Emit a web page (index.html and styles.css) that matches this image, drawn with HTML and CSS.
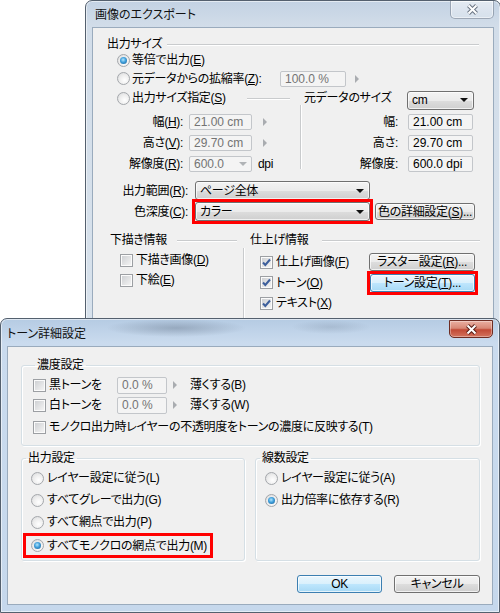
FILE: index.html
```html
<!DOCTYPE html>
<html lang="ja">
<head>
<meta charset="utf-8">
<title>画像のエクスポート</title>
<link rel="stylesheet" href="styles.css">
</head>
<body>

<div class="win win-back">
  <div class="titlebar">
    <span class="title">画像のエクスポート</span>
    <span class="close inactive">
      <svg width="13" height="11" viewBox="0 0 13 11"><path d="M2.5 1.5 L10.5 9.5 M10.5 1.5 L2.5 9.5" stroke="#6b7684" stroke-width="4" fill="none"/><path d="M2.5 1.5 L10.5 9.5 M10.5 1.5 L2.5 9.5" stroke="#fff" stroke-width="2" fill="none"/></svg>
    </span>
  </div>
  <div class="client client-back">
    <div class="head head-size"><span>出力サイズ</span><i class="line"></i></div>
    <div class="opt"><span class="radio on"></span><span>等倍で出力(<u>E</u>)</span></div>
    <div class="opt"><span class="radio"></span><span class="lbl-scale">元データからの拡縮率(<u>Z</u>):</span><span class="field dis w66">100.0 %</span><span class="tri tri-scale"></span></div>
    <div class="opt"><span class="radio"></span><span class="lbl-spec">出力サイズ指定(<u>S</u>)</span><i class="hline"></i><span class="src-lbl">元データのサイズ</span><span class="combo combo-cm"><span>cm</span><b class="dd"></b></span></div>

    <div class="dims">
      <div class="dims-l">
        <div class="dim"><span class="dl">幅(<u>H</u>):</span><span class="field dis w63">21.00 cm</span><span class="tri tri-dim"></span></div>
        <div class="dim"><span class="dl">高さ(<u>V</u>):</span><span class="field dis w63">29.70 cm</span><span class="tri tri-dim"></span></div>
        <div class="dim"><span class="dl">解像度(<u>R</u>):</span><span class="field dis w63 fcombo"><span>600.0</span><b class="dd grey"></b></span><span class="dpi">dpi</span></div>
      </div>
      <i class="vline vline-dims"></i>
      <div class="dims-r">
        <div class="dim"><span class="dl dlr">幅:</span><span class="field w65">21.00 cm</span></div>
        <div class="dim"><span class="dl dlr">高さ:</span><span class="field w65">29.70 cm</span></div>
        <div class="dim"><span class="dl dlr">解像度:</span><span class="field w65">600.0 dpi</span></div>
      </div>
    </div>

    <div class="pair pair1"><span class="pl">出力範囲(<u>R</u>):</span><span class="combo combo-wide"><span>ページ全体</span><b class="dd"></b></span></div>
    <div class="pair pair2"><span class="pl">色深度(<u>C</u>):</span><span class="hl hl-combo"><span class="combo combo-wide"><span>カラー</span><b class="dd"></b></span></span><span class="btn btn-color">色の詳細設定(<u>S</u>)...</span></div>

    <div class="info">
      <div class="info-heads">
        <div class="head head-draft"><span>下描き情報</span><i class="line"></i></div>
        <div class="head head-fin"><span>仕上げ情報</span><i class="line"></i></div>
      </div>
      <div class="info-body">
        <div class="info-l">
          <div class="crow"><span class="chk"></span><span>下描き画像(<u>D</u>)</span></div>
          <div class="crow"><span class="chk"></span><span>下絵(<u>E</u>)</span></div>
        </div>
        <i class="vline vline-info"></i>
        <div class="info-r">
          <div class="crow"><span class="chk on"><svg width="11" height="11" viewBox="0 0 11 11"><path d="M2 5.5 L4.3 8 L9 2.5" stroke="#3d5f9c" stroke-width="2" fill="none"/></svg></span><span>仕上げ画像(<u>F</u>)</span><span class="btn btn-side">ラスター設定(<u>R</u>)...</span></div>
          <div class="crow crow-mid"><span class="chk on"><svg width="11" height="11" viewBox="0 0 11 11"><path d="M2 5.5 L4.3 8 L9 2.5" stroke="#3d5f9c" stroke-width="2" fill="none"/></svg></span><span>トーン(<u>O</u>)</span><span class="hl hl-btn"><span class="btn btn-side hot">トーン設定(<u>T</u>)...</span></span></div>
          <div class="crow"><span class="chk on"><svg width="11" height="11" viewBox="0 0 11 11"><path d="M2 5.5 L4.3 8 L9 2.5" stroke="#3d5f9c" stroke-width="2" fill="none"/></svg></span><span>テキスト(<u>X</u>)</span></div>
        </div>
      </div>
    </div>
  </div>
</div>

<div class="win win-front">
  <div class="titlebar">
    <span class="title">トーン詳細設定</span>
    <span class="close active">
      <svg width="13" height="11" viewBox="0 0 13 11"><path d="M2.5 1.5 L10.5 9.5 M10.5 1.5 L2.5 9.5" stroke="#5a1e16" stroke-width="4" fill="none"/><path d="M2.5 1.5 L10.5 9.5 M10.5 1.5 L2.5 9.5" stroke="#fff" stroke-width="2" fill="none"/></svg>
    </span>
  </div>
  <div class="client client-front">
    <fieldset class="group g-density">
      <legend class="leg-first">濃度設定</legend>
      <div class="drow drow-1"><span class="chk"></span><span class="dlbl">黒トーンを</span><span class="field dis w50">0.0 %</span><span class="tri tri-d"></span><span class="thin">薄くする(B)</span></div>
      <div class="drow"><span class="chk"></span><span class="dlbl">白トーンを</span><span class="field dis w50">0.0 %</span><span class="tri tri-d"></span><span class="thin">薄くする(W)</span></div>
      <div class="drow drow-3"><span class="chk"></span><span>モノクロ出力時レイヤーの不透明度をトーンの濃度に反映する(T)</span></div>
    </fieldset>

    <div class="grow">
      <fieldset class="group g-out">
        <legend>出力設定</legend>
        <div class="rrow rrow-1"><span class="radio"></span><span>レイヤー設定に従う(L)</span></div>
        <div class="rrow"><span class="radio"></span><span>すべてグレーで出力(G)</span></div>
        <div class="rrow"><span class="radio"></span><span>すべて網点で出力(P)</span></div>
        <div class="rrow hl-row"><span class="radio on"></span><span>すべてモノクロの網点で出力(M)</span></div>
      </fieldset>
      <fieldset class="group g-lines">
        <legend>線数設定</legend>
        <div class="rrow rrow-1"><span class="radio"></span><span>レイヤー設定に従う(A)</span></div>
        <div class="rrow"><span class="radio on"></span><span>出力倍率に依存する(R)</span></div>
      </fieldset>
    </div>

    <div class="btnrow">
      <span class="btn btn-dlg def">OK</span>
      <span class="btn btn-dlg btn-cancel">キャンセル</span>
    </div>
  </div>
</div>

</body>
</html>
```

FILE: styles.css
```css
* { box-sizing: border-box; margin: 0; padding: 0; }
html, body { width: 500px; height: 613px; }
body {
  position: relative;
  overflow: hidden;
  background: #fff;
  font-family: "Liberation Sans", "Noto Sans CJK JP", sans-serif;
  font-size: 12px;
  line-height: 14px;
  letter-spacing: -0.3px;
  color: #000;
  font-feature-settings: "palt";
}
u { text-decoration: underline; text-underline-offset: 1px; }

/* ---------- windows ---------- */
.win {
  position: absolute;
  display: flex;
  flex-direction: column;
  border: 1px solid #54606e;
  border-radius: 7px 7px 0 0;
  padding: 0 6px;
  box-shadow: inset 0 0 0 1px rgba(255,255,255,.55);
}
.win-back {
  left: 85px;
  top: 0;
  width: 416px;
  height: 330px;
  background: linear-gradient(#c3d2e3 0, #d2dde9 26px, #d8e2ec 100%);
}
.win-front {
  left: 0;
  top: 318px;
  width: 500px;
  height: 295px;
  padding-bottom: 7px;
  background:
    radial-gradient(ellipse 70px 9px at 175px 9px, rgba(80,95,115,.35), rgba(80,95,115,0)),
    radial-gradient(ellipse 40px 7px at 330px 8px, rgba(80,95,115,.18), rgba(80,95,115,0)),
    linear-gradient(#b5cbe3 0, #cadbee 24px, #c6d8ec 100%);
}

.titlebar {
  display: flex;
  justify-content: space-between;
  flex: none;
}
.win-back .titlebar { height: 26px; }
.win-front .titlebar { height: 27px; }
.title {
  align-self: center;
  padding-left: 3px;
  color: #111;
  white-space: nowrap;
  font-family: "Noto Sans CJK JP", sans-serif;
  font-size: 12px;
  letter-spacing: 0;
}
.win-front .title { padding-left: 0; margin-top: 1px; }

.close {
  width: 44px;
  height: 18px;
  display: flex;
  align-items: center;
  justify-content: center;
  border-radius: 0 0 5px 5px;
  align-self: flex-start;
}
.close.inactive {
  border: 1px solid rgba(95,110,130,.55);
  border-top: none;
  background: linear-gradient(rgba(255,255,255,.55), rgba(255,255,255,.2));
  box-shadow: inset 0 0 0 1px rgba(255,255,255,.5);
}
.close.active {
  margin-top: 1px;
  border: 1px solid #6e2c22;
  background: linear-gradient(#eab0a2 0, #d88876 45%, #c24a36 55%, #d3735d 100%);
  box-shadow: inset 0 0 0 1px rgba(255,255,255,.35);
}

.client {
  background: #f0f0f0;
  border: 1px solid #9aabbd;
  flex: 1;
  display: flex;
  flex-direction: column;
  overflow: hidden;
}

/* ---------- common controls ---------- */
.radio {
  position: relative;
  flex: none;
  width: 13px;
  height: 13px;
  border-radius: 50%;
  border: 1px solid #a4a7ab;
  background: radial-gradient(circle at 60% 65%, #ffffff 0, #ececec 55%, #d3d5d8 100%);
  margin-right: 2px;
}
.radio.on::after {
  content: "";
  position: absolute;
  left: 2px;
  top: 2px;
  width: 7px;
  height: 7px;
  border-radius: 50%;
  background: radial-gradient(circle at 45% 40%, #b3e6fd 0, #3f9fdb 45%, #1a5a8e 100%);
}

.chk {
  flex: none;
  width: 13px;
  height: 13px;
  border: 1px solid #9c9fa3;
  background: #fbfbfb;
  margin-right: 3px;
  display: flex;
  align-items: center;
  justify-content: center;
  position: relative;
}
.chk::before {
  content: "";
  position: absolute;
  left: 1px;
  top: 1px;
  width: 9px;
  height: 9px;
  background: linear-gradient(135deg, #cfd1d4, #f3f3f3);
}
.chk svg { position: relative; }

.field {
  display: flex;
  align-items: center;
  justify-content: space-between;
  height: 16px;
  border: 1px solid #c3c6ca;
  border-radius: 2px;
  padding: 0 4px;
  background: #f4f4f4;
  color: #000;
  white-space: nowrap;
  flex: none;
  letter-spacing: 0;
}
.field.dis { color: #737373; }
.w66 { width: 66px; }
.w63 { width: 63px; }
.w65 { width: 65px; }
.w50 { width: 50px; height: 17px; }

.tri {
  flex: none;
  width: 0;
  height: 0;
  border-left: 4px solid #a9acb0;
  border-top: 4px solid transparent;
  border-bottom: 4px solid transparent;
}

.dd {
  flex: none;
  width: 0;
  height: 0;
  border-left: 4px solid transparent;
  border-right: 4px solid transparent;
  border-top: 4px solid #111;
}
.dd.grey { border-top-color: #b0b3b6; }

.btn {
  display: inline-flex;
  align-items: center;
  justify-content: center;
  flex: none;
  border: 1px solid #707070;
  border-radius: 3px;
  background: linear-gradient(#f3f3f3 0, #ebebeb 50%, #dddddd 51%, #cfcfcf 100%);
  box-shadow: inset 0 0 0 1px rgba(255,255,255,.7);
  white-space: nowrap;
}
.btn.hot, .btn.def {
  border-color: #3c7fb1;
  background: linear-gradient(#eaf6fd 0, #d9f0fc 50%, #bee6fd 51%, #a7d9f5 100%);
}

.combo {
  display: flex;
  align-items: center;
  justify-content: space-between;
  height: 19px;
  border: 1px solid #707070;
  border-radius: 3px;
  padding: 0 5px 0 4px;
  background: linear-gradient(#f3f3f3 0, #ebebeb 50%, #dddddd 51%, #cfcfcf 100%);
  box-shadow: inset 0 0 0 1px rgba(255,255,255,.7);
  white-space: nowrap;
  flex: none;
}

.hl { display: inline-flex; border: 3px solid #ff0000; flex: none; }

.line { flex: 1; height: 1px; background: #c9cbcd; box-shadow: 0 1px 0 #fff; }
.vline { flex: none; width: 1px; background: #c9cbcd; box-shadow: 1px 0 0 #fff; }

/* ---------- back dialog ---------- */
.head { display: flex; align-items: center; height: 14px; white-space: nowrap; }
.head-size { margin: 9px 14px 0 14px; }
.head-size .line { margin-left: 5px; }

.opt { display: flex; align-items: center; height: 20px; padding-left: 24px; white-space: nowrap; }
.lbl-scale { width: 148px; }
.tri-scale { margin-left: 9px; }
.lbl-spec { width: 115px; }
.hline { width: 43px; height: 1px; background: #c9cbcd; box-shadow: 0 1px 0 #fff; flex: none; }
.src-lbl { margin-left: 14px; width: 103px; }
.combo-cm { width: 67px; margin-top: 4px; }

.dims { display: flex; margin-top: 3px; }
.dims-l { width: 207px; }
.dim { display: flex; align-items: center; height: 21px; white-space: nowrap; }
.dl { width: 90px; text-align: right; margin-right: 6px; }
.dlr { width: 97px; margin-right: 10px; }
.tri-dim { margin-left: 11px; }
.dpi { margin-left: 6px; }
.fcombo { padding-right: 4px; }
.vline-dims { height: 64px; margin-top: -6px; }

.pair { display: flex; align-items: center; height: 20px; white-space: nowrap; }
.pair1 { margin-top: 7px; }
.pair2 { margin-top: 2px; }
.pl { width: 95px; text-align: right; margin-right: 7px; }
.combo-wide { width: 175px; }
.hl-combo { margin: -3px -3px -3px -3px; }
.btn-color { width: 100px; height: 17px; margin-left: 5px; }

.info { margin-top: 12px; display: flex; flex-direction: column; }
.info-heads { display: flex; }
.head-draft { width: 144px; padding-left: 17px; }
.head-draft .line { margin-left: 10px; }
.head-fin { width: 230px; margin-left: 13px; }
.head-fin .line { margin-left: 14px; }
.info-body { display: flex; margin-top: 3px; }
.info-l { width: 150px; padding-left: 27px; }
.vline-info { height: 80px; margin-top: -2px; }
.info-r { width: 231px; padding-left: 16px; margin-top: 2px; }
.crow { display: flex; align-items: center; height: 20px; white-space: nowrap; }
.crow-mid { height: 21px; }
.btn-side { width: 106px; height: 18px; margin-left: auto; }
.hl-btn { margin: -3px -3px -3px auto; }
.hl-btn .btn-side { width: 105px; margin-left: 0; }

/* ---------- front dialog ---------- */
.group {
  border: 1px solid #d5dfe5;
  border-radius: 3px;
  box-shadow: inset 1px 1px 0 #fff, 1px 1px 0 #fff;
  min-width: 0;
}
.group legend { margin-left: 4px; padding: 0 2px; line-height: 14px; white-space: nowrap; }
.group legend.leg-first { margin-left: 2px; }

.g-density { margin: 11px 0 0 13px; width: 459px; padding: 0 0 8px 11px; }
.drow { display: flex; align-items: center; height: 20px; white-space: nowrap; }
.drow-1 { margin-top: 3px; }
.drow-3 { margin-top: 2px; }
.dlbl { width: 68px; }
.tri-d { margin-left: 6px; }
.thin { margin-left: 13px; }

.grow { display: flex; gap: 10px; margin: 5px 0 0 13px; }
.g-out { width: 224px; padding: 0 0 2px 0; }
.g-lines { width: 225px; padding: 0 0 2px 0; }
.rrow { display: flex; align-items: center; height: 22px; padding-left: 9px; white-space: nowrap; }
.rrow .radio { margin-right: 3px; }
.rrow-1 { margin-top: 2px; }
.hl-row {
  margin-left: 1px;
  width: 190px;
  height: 25px;
  padding-left: 5px;
  border: 3px solid #ff0000;
}

.btnrow { display: flex; justify-content: flex-end; gap: 12px; margin-top: 14px; padding-right: 12px; }
.btn-dlg { width: 85px; height: 18px; }
.btn-cancel { width: 86px; }
```
